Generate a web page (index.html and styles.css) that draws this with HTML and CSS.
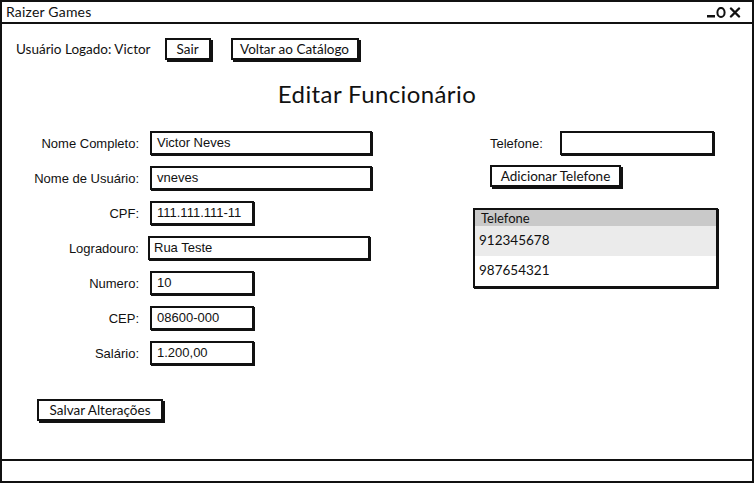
FILE: index.html
```html
<!DOCTYPE html>
<html lang="pt">
<head>
<meta charset="utf-8">
<title>Raizer Games</title>
<link rel="stylesheet" href="styles.css">
</head>
<body>
<div class="window">
  <div class="titlebar">
    <span class="app-name">Raizer Games</span>
    <svg class="win-controls" width="40" height="12" viewBox="0 0 40 12">
      <rect x="1" y="8" width="8" height="2.5" fill="#111"/>
      <ellipse cx="15" cy="5.5" rx="3.6" ry="4.6" fill="none" stroke="#111" stroke-width="2"/>
      <path d="M25 1.5 L33 9.5 M33 1.5 L25 9.5" stroke="#111" stroke-width="2.4" stroke-linecap="round"/>
    </svg>
  </div>

  <div class="content">
    <div class="topbar">
      <span class="logged">Usuário Logado: Victor</span>
      <button class="btn btn-sair">Sair</button>
      <button class="btn btn-voltar">Voltar ao Catálogo</button>
    </div>

    <h1 class="heading">Editar Funcionário</h1>

    <div class="form-area">
      <div class="fields">
        <label class="lbl">Nome Completo:</label>
        <div class="input wide">Victor Neves</div>
        <label class="lbl">Nome de Usuário:</label>
        <div class="input wide">vneves</div>
        <label class="lbl">CPF:</label>
        <div class="input short">111.111.111-11</div>
        <label class="lbl">Logradouro:</label>
        <div class="input wide shift">Rua Teste</div>
        <label class="lbl">Numero:</label>
        <div class="input short">10</div>
        <label class="lbl">CEP:</label>
        <div class="input short">08600-000</div>
        <label class="lbl">Salário:</label>
        <div class="input short">1.200,00</div>
      </div>

      <div class="phones">
        <div class="phone-row">
          <label class="lbl">Telefone:</label>
          <div class="input phone-input"></div>
        </div>
        <button class="btn btn-add">Adicionar Telefone</button>
        <div class="table">
          <div class="th">Telefone</div>
          <div class="tr alt">912345678</div>
          <div class="tr">987654321</div>
        </div>
      </div>
    </div>

    <div class="save-row">
      <button class="btn btn-save">Salvar Alterações</button>
    </div>
  </div>

  <div class="statusbar"></div>
</div>
</body>
</html>
```

FILE: styles.css
```css
html, body {
  margin: 0;
  padding: 0;
  background: #fff;
}

body {
  font-family: "Lato", "Open Sans", sans-serif;
  font-size: 13px;
  color: #111;
}

.window {
  box-sizing: border-box;
  width: 754px;
  height: 483px;
  border: 2px solid #111;
  display: flex;
  flex-direction: column;
}

.titlebar {
  height: 20px;
  border-bottom: 2px solid #111;
  display: flex;
  align-items: center;
  justify-content: space-between;
  padding: 0 6px 0 4px;
  font-size: 14px;
}

.app-name {
  line-height: 20px;
  letter-spacing: 0.2px;
}

.win-controls {
  margin-top: 1px;
}

.content {
  flex: 1;
  display: flex;
  flex-direction: column;
}

.topbar {
  display: flex;
  align-items: center;
  padding: 13px 0 0 14px;
  height: 24px;
}

.logged {
  font-size: 13.5px;
  margin-right: 14px;
}

.btn {
  font-family: "Lato", "Open Sans", sans-serif;
  font-size: 13.5px;
  color: #111;
  background: #fff;
  border: 2px solid #111;
  box-shadow: 2px 2px 0 #111;
  height: 22px;
  padding: 0;
  margin: 0;
  line-height: 18px;
  white-space: nowrap;
  cursor: default;
}

.btn-sair {
  width: 46px;
  margin-right: 20px;
}

.btn-voltar {
  width: 128px;
}

.heading {
  margin: 20px 0 0 0;
  font-family: "Lato", "Open Sans", sans-serif;
  font-weight: 400;
  font-size: 24px;
  line-height: 26px;
  letter-spacing: 0.4px;
  text-align: center;
  height: 26px;
}

.form-area {
  display: flex;
  margin-top: 24px;
}

.fields {
  display: grid;
  grid-template-columns: 137px auto;
  column-gap: 11px;
  row-gap: 11px;
  align-items: center;
  justify-items: start;
  align-content: start;
}

.lbl {
  font-family: "Liberation Sans", Arial, sans-serif;
  font-size: 13px;
  justify-self: end;
}

.input {
  box-sizing: border-box;
  height: 24px;
  border: 2px solid #111;
  box-shadow: 1px 1px 0 #111;
  background: #fff;
  font-family: "Liberation Sans", Arial, sans-serif;
  font-size: 13px;
  line-height: 20px;
  padding: 0 5px;
  white-space: nowrap;
}

.input.wide {
  width: 222px;
}

.input.short {
  width: 104px;
}

.input.shift {
  margin-left: -2px;
  padding-left: 4px;
}

.phones {
  margin-left: 101px;
  width: 245px;
  display: flex;
  flex-direction: column;
  align-items: flex-start;
}

.phone-row {
  display: flex;
  align-items: center;
  margin-left: 17px;
}

.phone-row .lbl {
  width: 70px;
}

.phone-input {
  width: 154px;
}

.btn-add {
  margin: 10px 0 0 17px;
  width: 131px;
}

.table {
  box-sizing: border-box;
  margin-top: 21px;
  width: 245px;
  border: 2px solid #111;
  box-shadow: 1px 1px 0 #111;
}

.th {
  background: #c9c9c9;
  height: 16px;
  line-height: 16px;
  padding-left: 6px;
  font-size: 13px;
}

.tr {
  height: 30px;
  line-height: 28px;
  padding-left: 4px;
  font-size: 13.5px;
  background: #fff;
}

.tr.alt {
  background: #ebebeb;
}

.save-row {
  padding: 34px 0 0 35px;
}

.btn-save {
  width: 126px;
}

.statusbar {
  height: 20px;
  border-top: 2px solid #111;
}
```
